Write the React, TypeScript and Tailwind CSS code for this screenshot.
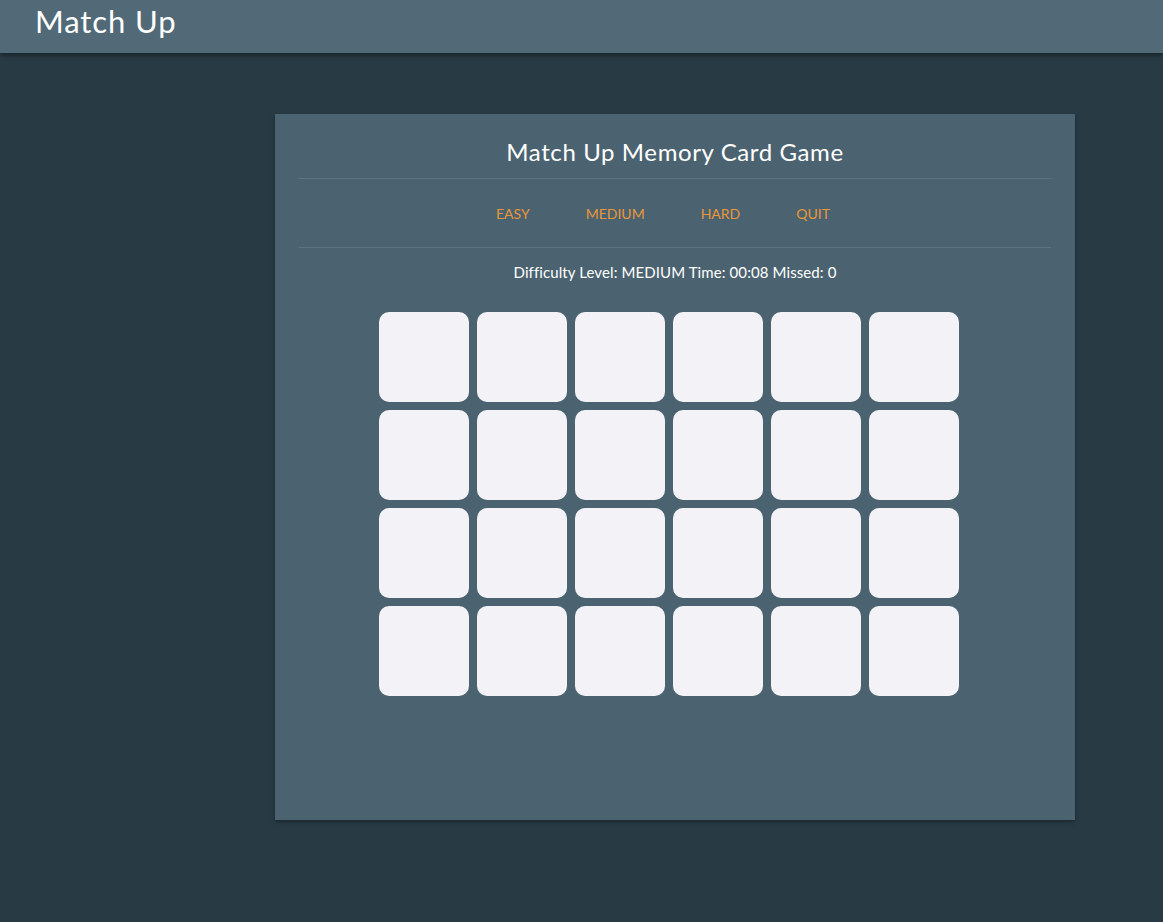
const levels = ["EASY", "MEDIUM", "HARD", "QUIT"];

export default function App() {
    const cards = Array.from({ length: 24 }, (_, i) => i);

    return (
        <div className="min-h-[922px] bg-[#283b45] font-['Lato',sans-serif] text-white">
            {/* Top bar */}
            <header className="relative z-10 h-[53px] bg-[#526a77] px-[35px] shadow-[0_2px_5px_rgba(0,0,0,0.45)]">
                <h1 className="pt-px text-[31px] font-normal leading-[40px] tracking-[0.9px]">Match Up</h1>
            </header>

            <div className="pt-[61px] pl-[275px]">
                <section className="h-[706px] w-[800px] bg-[#4b6370] px-6 shadow-[0_2px_4px_rgba(0,0,0,0.35)]">
                    <h2 className="pt-[22px] pb-[10px] text-center text-[24px] leading-[32px] tracking-[0.6px]">
                        Match Up Memory Card Game
                    </h2>
                    <div className="h-px bg-[#5d7480]" />

                    <nav className="flex h-[68px] items-center justify-center gap-[56px] pr-6 text-[14px] text-[#e8973a]">
                        {levels.map((l) => (
                            <span key={l} className="cursor-pointer">
                                {l}
                            </span>
                        ))}
                    </nav>
                    <div className="h-px bg-[#5d7480]" />

                    <p className="pt-[14px] text-center text-[15px] leading-[20px] tracking-[0.1px]">
                        Difficulty Level: MEDIUM Time: 00:08 Missed: 0
                    </p>

                    <div className="mt-[30px] ml-[80px] grid w-[580px] grid-cols-6 gap-2">
                        {cards.map((c) => (
                            <div key={c} className="h-[90px] w-[90px] rounded-[10px] bg-[#f2f2f7]" />
                        ))}
                    </div>
                </section>
            </div>
        </div>
    );
}
